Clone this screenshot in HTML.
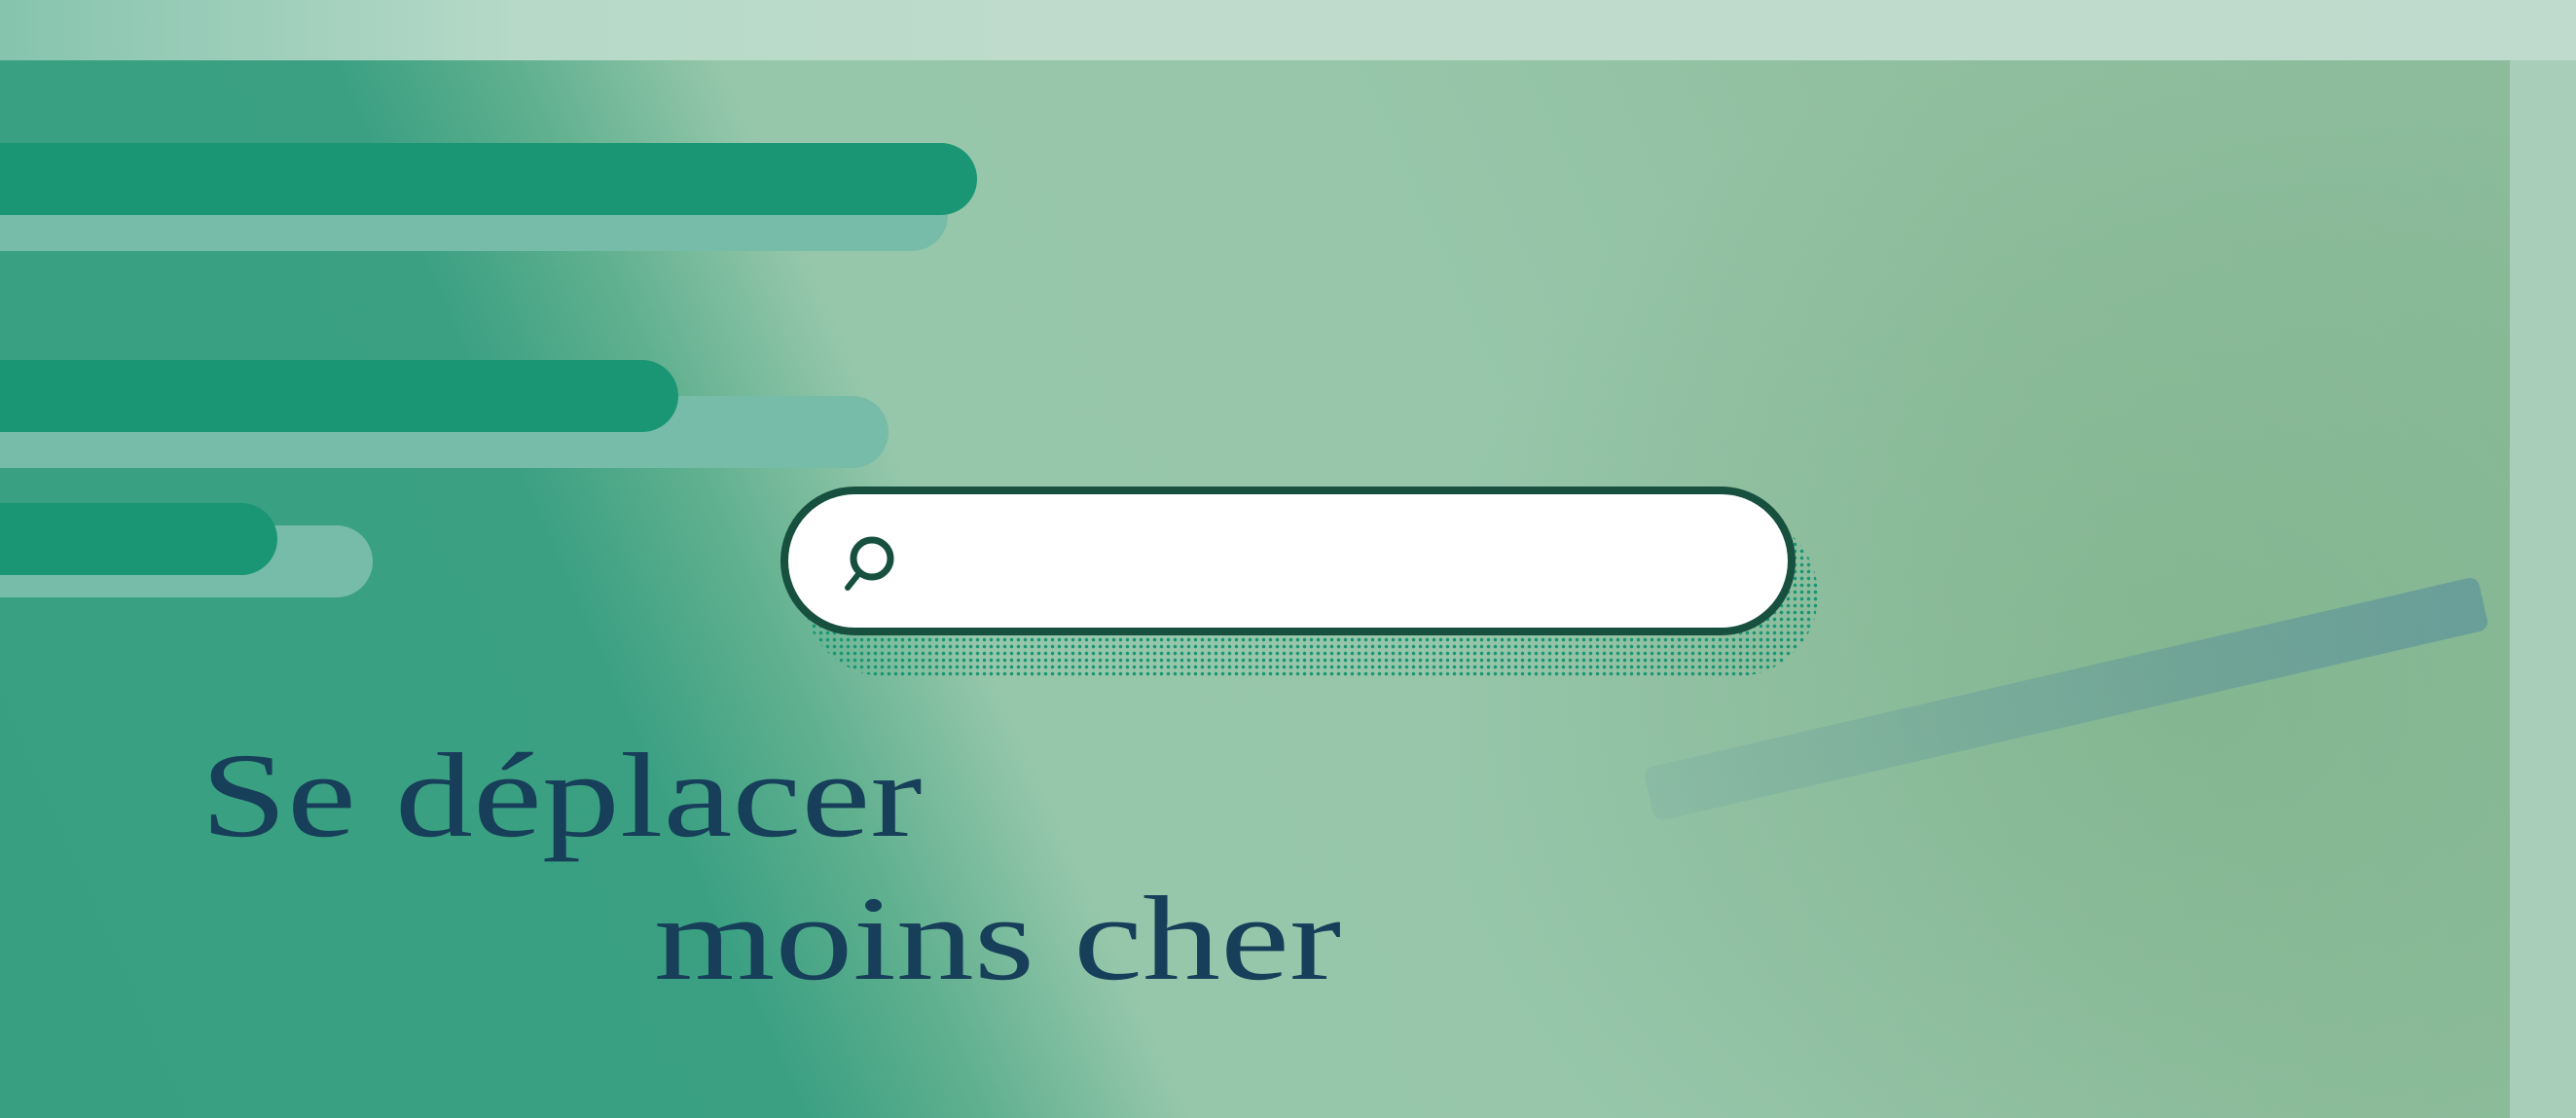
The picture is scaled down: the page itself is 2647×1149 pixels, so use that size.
<!DOCTYPE html>
<html><head><meta charset="utf-8"><style>
html,body{margin:0;padding:0}
body{width:2647px;height:1149px;position:relative;overflow:hidden;background:linear-gradient(90deg,#86c4ae 0%,#b6d9c8 20%,#bedbcb 40%,#bfdbcd 100%);font-family:"Liberation Serif",serif}
.main{position:absolute;left:0;top:62px;width:2579px;height:1087px;
background:linear-gradient(66deg,#38a081 0%,#3ba082 27%,#5fb08f 33%,#97c7ab 40%,#97c6aa 60%,#90bf9f 80%,#8cbc9c 100%)}
.land{position:absolute;left:1500px;top:62px;width:1079px;height:1087px;background:radial-gradient(ellipse at 70% 60%,rgba(110,165,120,.35) 0%,rgba(110,165,120,.15) 50%,rgba(120,170,130,0) 75%)}
.train{position:absolute;left:1688px;top:790px;width:880px;height:56px;background:linear-gradient(90deg,rgba(90,140,160,.12),rgba(60,120,160,.4));transform:rotate(-13deg);transform-origin:left top;border-radius:10px}
.rband{position:absolute;left:2579px;top:62px;width:68px;height:1087px;background:#a8cdb9}
.bar{position:absolute;left:0;border-radius:0 40px 40px 0}
.d{background:#1a9674}.l{background:#76bca8}
.shadow{position:absolute;left:826px;top:528px;width:1042px;height:167px;border-radius:84px;
background-image:radial-gradient(circle,#1a9674 1.6px,transparent 2px);background-size:7px 7px}
.search{position:absolute;left:802px;top:500px;width:1043px;height:153px;box-sizing:border-box;border:8px solid #17503f;border-radius:77px;background:#fff}
.t{position:absolute;color:#173f5a;font-size:124px;line-height:1;white-space:nowrap;transform:scaleX(1.29);transform-origin:left top}
</style></head><body>
<div class="main"></div>
<div class="land"></div>
<div class="train"></div>
<div class="rband"></div>
<div class="bar l" style="top:184px;width:974px;height:74px"></div>
<div class="bar d" style="top:147px;width:1004px;height:74px"></div>
<div class="bar l" style="top:407px;width:913px;height:74px"></div>
<div class="bar d" style="top:370px;width:697px;height:74px"></div>
<div class="bar l" style="top:540px;width:383px;height:74px"></div>
<div class="bar d" style="top:517px;width:285px;height:74px"></div>
<div class="shadow"></div>
<div class="search"></div>
<svg style="position:absolute;left:858px;top:546px" width="70" height="64" viewBox="0 0 70 64">
<circle cx="38" cy="28" r="19" fill="none" stroke="#17503f" stroke-width="7"/>
<line x1="25" y1="43" x2="13" y2="58" stroke="#17503f" stroke-width="6" stroke-linecap="round"/>
</svg>
<div class="t" style="left:206px;top:756px">Se déplacer</div>
<div class="t" style="left:672px;top:903px">moins cher</div>
</body></html>
